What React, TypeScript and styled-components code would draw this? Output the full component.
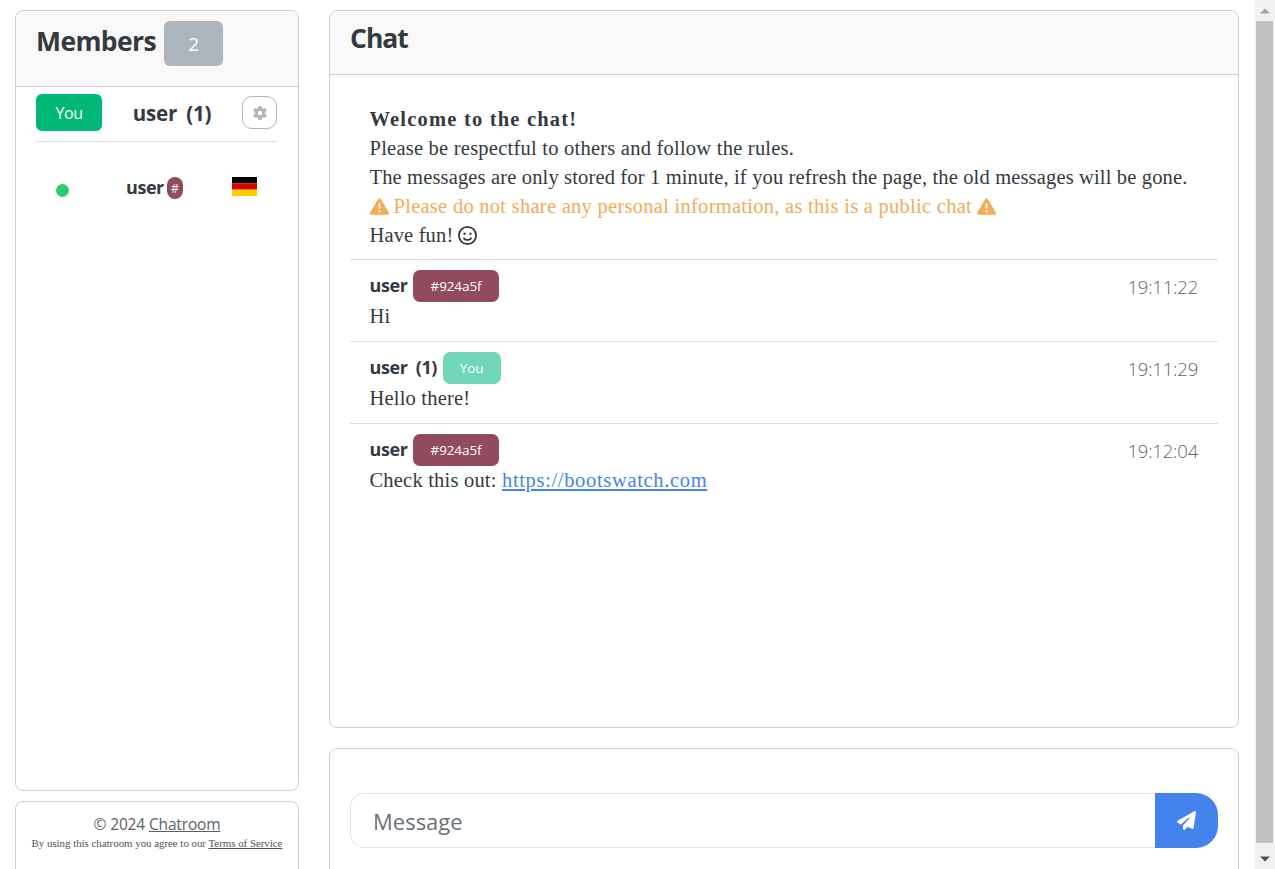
import React from "react";
import styled, { createGlobalStyle } from "styled-components";
import { FaGear, FaPaperPlane, FaTriangleExclamation, FaRegFaceSmile } from "react-icons/fa6";

const Global = createGlobalStyle`
  html, body { margin: 0; padding: 0; height: 100%; overflow: hidden; background: #fff; }
  body { font-family: "Liberation Serif", serif; color: #343a40; }
`;
const sans = `"Open Sans", "Noto Sans", sans-serif`;

const Screen = styled.div`display: flex; width: 1275px; height: 869px; overflow: hidden;`;
const Page = styled.div`
  width: 1255px; height: 869px; box-sizing: border-box; padding: 10px 16px 0 15px;
  display: grid; grid-template-columns: 284px 910px; column-gap: 30px; overflow: hidden;
`;
const Column = styled.div<{ $gap: number }>`display: flex; flex-direction: column; gap: ${p => p.$gap}px;`;
const Card = styled.section<{ $h: number }>`
  flex: none; height: ${p => p.$h}px; box-sizing: border-box; background: #fff;
  border: 1px solid #cfcfcf; border-radius: 8px; overflow: hidden;
`;
const Head = styled.header<{ $h: number }>`
  height: ${p => p.$h}px; box-sizing: border-box; background: #f8f8f8; border-bottom: 1px solid #d0d0d0;
  display: flex; align-items: flex-start;
`;
const MembersHead = styled(Head)`padding: 10px 0 0 20px; gap: 8px;`;
const ChatHead = styled(Head)`padding: 7px 0 0 20px;`;
const Title = styled.h2`
  margin: 0; font: 700 26.5px/40px ${sans}; color: #343a40; letter-spacing: -0.6px;
`;
const ChatTitle = styled(Title)`letter-spacing: -1px;`;
const CountBadge = styled.span`
  width: 59px; height: 45px; background: #adb5bd; color: #fff; border-radius: 6px;
  display: flex; align-items: center; justify-content: center; font: 400 19px ${sans};
`;
const SelfRow = styled.div`
  margin: 7px 21px 0 20px; height: 48px; box-sizing: border-box; border-bottom: 1px solid #dcdcdc;
  display: grid; grid-template-columns: 66px 140px 35px; align-items: start;
`;
const YouButton = styled.div`
  height: 37px; background: #02b875; color: #fff; border-radius: 6px;
  display: flex; align-items: center; justify-content: center; font: 400 16px ${sans}; letter-spacing: -0.4px;
`;
const SelfName = styled.div`
  text-align: center; font: 700 20.5px/39px ${sans}; color: #343a40; letter-spacing: -0.2px; word-spacing: 4px;
`;
const GearButton = styled.div`
  width: 35px; height: 33px; margin-top: 2px; box-sizing: border-box; border: 1px solid #adb5bd; border-radius: 10px;
  display: flex; align-items: center; justify-content: center; color: #adb5bd; font-size: 14px;
`;
const MemberRow = styled.div`
  margin: 34px 0 0 40px; display: flex; align-items: flex-start; height: 24px;
`;
const Dot = styled.span`
  width: 13px; height: 13px; margin-top: 8px; border-radius: 50%; background: #2ecc71; flex: none;
`;
const MemberName = styled.span`
  margin-left: 57px; font: 700 18px/23px ${sans}; color: #343a40; letter-spacing: -0.45px; width: 41px;
`;
const HashBadge = styled.span`
  width: 16px; height: 22px; background: #924a5f; color: #fff; border-radius: 8px; margin-top: 1px;
  display: flex; align-items: center; justify-content: center; font: 400 12px ${sans};
`;
const FlagIcon = styled.svg`margin: 1px 0 0 49px; display: block; flex: none;`;

const Footer = styled(Card)`padding: 11px 0 0; text-align: center;`;
const Copy = styled.div`font: 400 15.5px/22px ${sans}; color: #5a5f66; letter-spacing: -0.15px;`;
const CopyLink = styled.span`text-decoration: underline;`;
const Small = styled.div`margin-top: 1px; font: 400 10.85px/15px "Liberation Serif", serif; color: #4c5258;`;

const Welcome = styled.div`
  margin: 0 20px; padding: 30px 20px 11px 19.5px; height: 185px; box-sizing: border-box;
  font-size: 20.5px; line-height: 29px; border-bottom: 1px solid #dcdcdc;
`;
const Line = styled.div<{ $warn?: boolean; $bold?: boolean; $track: number }>`
  display: flex; align-items: center; gap: 5px; height: 29px; white-space: pre;
  color: ${p => (p.$warn ? "#f5ab55" : "#343a40")};
  font-weight: ${p => (p.$bold ? 700 : 400)};
  letter-spacing: ${p => p.$track}px;
  svg { font-size: 19px; }
`;
const Message = styled.article`
  margin: 0 20px; padding: 10px 20px 0 19.5px; height: 82px; box-sizing: border-box; border-bottom: 1px solid #dcdcdc;
  &:last-child { border-bottom: 0; }
`;
const MsgHead = styled.div`display: flex; align-items: flex-start; height: 32px;`;
const Author = styled.span`
  font: 700 18px/32px ${sans}; letter-spacing: -0.4px; word-spacing: 4px; color: #343a40; height: 30px; margin-top: -1px;
`;
const Tag = styled.span<{ $bg: string; $w: number }>`
  margin-left: 5.5px; width: ${p => p.$w}px; height: 32px; border-radius: 7px; background: ${p => p.$bg}; color: #fff;
  display: flex; align-items: center; justify-content: center; font: 400 13.5px ${sans}; letter-spacing: -0.1px;
`;
const Time = styled.span`
  margin-left: auto; margin-top: 2px; font: 300 18.5px/30px ${sans}; color: #5f6367; letter-spacing: -0.2px;
`;
const Body = styled.div`font-size: 20.5px; line-height: 29px; letter-spacing: 0.2px;`;
const Link = styled.a`color: #4582ec; text-decoration: underline; letter-spacing: 0.66px;`;

const InputCard = styled(Card)`padding: 44px 20px 0;`;
const InputGroup = styled.div`display: flex; height: 55px;`;
const InputBox = styled.input`
  flex: 1; min-width: 0; box-sizing: border-box; border: 1px solid #e2e2e2; border-right: 0; outline: 0;
  border-radius: 14px 0 0 14px; padding: 0 22px; background: #fff; font: 400 22px ${sans}; color: #343a40;
  &::placeholder { color: #6c7177; opacity: 1; }
`;
const SendButton = styled.button`
  width: 63px; border: 0; padding: 0; background: #4582ec; color: #fff; border-radius: 0 22px 22px 0;
  display: flex; align-items: center; justify-content: center; font-size: 19px;
`;

const Scrollbar = styled.div`
  width: 20px; height: 869px; box-sizing: border-box; padding-right: 1px; background: #f1f1f1;
  display: flex; flex-direction: column; align-items: center; flex: none;
`;
const ScrollEnd = styled.div`height: 21px; width: 19px; display: flex; align-items: center; justify-content: center; flex: none;`;
const Thumb = styled.div`width: 17px; flex: 1; background: #c1c1c1;`;
const TrackGap = styled.div`height: 5px; flex: none;`;

const Arrow = ({ up }: { up?: boolean }) => (
  <svg width="10" height="6" viewBox="0 0 10 6" aria-hidden>
    <path d={up ? "M5 0.5 10 5.5H0z" : "M0 .5h10L5 5.5z"} fill={up ? "#a3a3a3" : "#505050"} />
  </svg>
);

const Flag = () => (
  <FlagIcon width="25" height="19" viewBox="0 0 25 19" aria-hidden>
    <rect width="25" height="6.4" y="0" fill="#000" />
    <rect width="25" height="6.4" y="6.3" fill="#dd0000" />
    <rect width="25" height="6.4" y="12.6" fill="#ffce00" />
  </FlagIcon>
);

export default function App() {
  return (
    <Screen>
      <Global />
      <Page>
        <Column $gap={10}>
          <Card $h={781}>
            <MembersHead $h={76}>
              <Title>Members</Title>
              <CountBadge>2</CountBadge>
            </MembersHead>
            <SelfRow>
              <YouButton>You</YouButton>
              <SelfName>user (1)</SelfName>
              <GearButton><FaGear /></GearButton>
            </SelfRow>
            <MemberRow>
              <Dot />
              <MemberName>user</MemberName>
              <HashBadge>#</HashBadge>
              <Flag />
            </MemberRow>
          </Card>
          <Footer $h={90}>
            <Copy>© 2024 <CopyLink>Chatroom</CopyLink></Copy>
            <Small>By using this chatroom you agree to our <CopyLink>Terms of Service</CopyLink></Small>
          </Footer>
        </Column>
        <Column $gap={20}>
          <Card $h={718}>
            <ChatHead $h={64}><ChatTitle>Chat</ChatTitle></ChatHead>
            <Welcome>
              <Line $bold $track={1.2}>Welcome to the chat!</Line>
              <Line $track={0.23}>Please be respectful to others and follow the rules.</Line>
              <Line $track={0.15}>The messages are only stored for 1 minute, if you refresh the page, the old messages will be gone.</Line>
              <Line $warn $track={0.27}><FaTriangleExclamation />Please do not share any personal information, as this is a public chat<FaTriangleExclamation /></Line>
              <Line $track={0.15}>Have fun!<FaRegFaceSmile /></Line>
            </Welcome>
            <Message>
              <MsgHead><Author>user</Author><Tag $bg="#924a5f" $w={86}>#924a5f</Tag><Time>19:11:22</Time></MsgHead>
              <Body>Hi</Body>
            </Message>
            <Message>
              <MsgHead><Author>user (1)</Author><Tag $bg="#6fd6b8" $w={58}>You</Tag><Time>19:11:29</Time></MsgHead>
              <Body>Hello there!</Body>
            </Message>
            <Message>
              <MsgHead><Author>user</Author><Tag $bg="#924a5f" $w={86}>#924a5f</Tag><Time>19:12:04</Time></MsgHead>
              <Body>Check this out: <Link href="#">https://bootswatch.com</Link></Body>
            </Message>
          </Card>
          <InputCard $h={140}>
            <InputGroup>
              <InputBox placeholder="Message" />
              <SendButton aria-label="Send"><FaPaperPlane /></SendButton>
            </InputGroup>
          </InputCard>
        </Column>
      </Page>
      <Scrollbar>
        <ScrollEnd><Arrow up /></ScrollEnd>
        <Thumb />
        <TrackGap />
        <ScrollEnd><Arrow /></ScrollEnd>
      </Scrollbar>
    </Screen>
  );
}
